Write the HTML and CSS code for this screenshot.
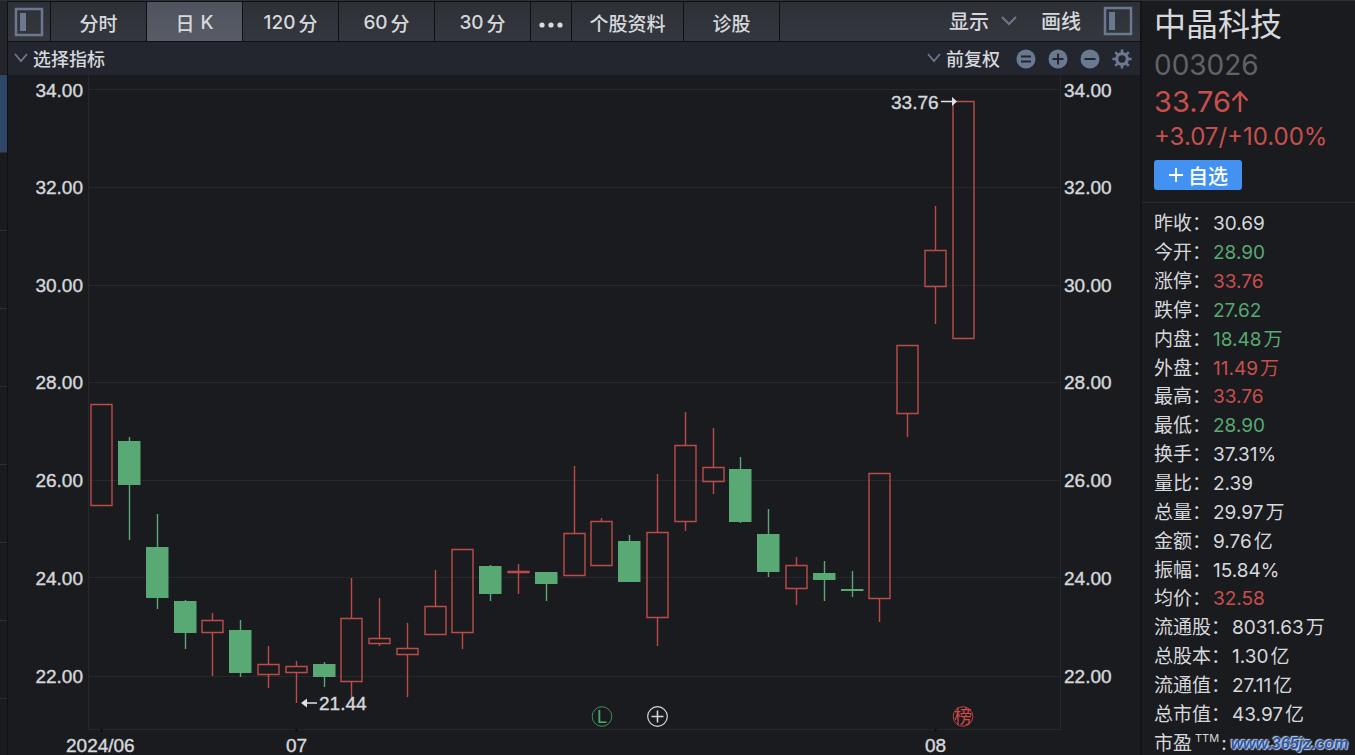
FILE: index.html
```html
<!DOCTYPE html>
<html lang="zh-CN">
<head>
<meta charset="utf-8">
<title>中晶科技 003026</title>
<link rel="stylesheet" href="styles.css">
</head>
<body>
<div class="app">
  <div class="rail">
    <div class="rail-head"></div>
    <div class="rail-cell rail-active"></div>
    <div class="rail-cell"></div><div class="rail-cell"></div><div class="rail-cell"></div><div class="rail-cell"></div>
    <div class="rail-cell"></div><div class="rail-cell"></div><div class="rail-cell"></div><div class="rail-cell"></div>
  </div>
  <main class="main">
    <div class="toolbar">
      <button class="tab tab-icon" aria-label="左侧面板"><svg width="30" height="30" viewBox="0 0 30 30"><rect x="2" y="2" width="26" height="26" fill="none" stroke="#6b7990" stroke-width="2.5"/><rect x="6" y="6" width="6" height="18" fill="#6b7990"/></svg></button>
      <button class="tab">分时</button>
      <button class="tab tab-on">日<span class="num">K</span></button>
      <button class="tab"><span class="num">120</span>分</button>
      <button class="tab"><span class="num">60</span>分</button>
      <button class="tab"><span class="num">30</span>分</button>
      <button class="tab tab-more" aria-label="更多"><svg width="26" height="8" viewBox="0 0 26 8"><g fill="#d9dbdf"><circle cx="4" cy="4" r="2.6"/><circle cx="13" cy="4" r="2.6"/><circle cx="22" cy="4" r="2.6"/></g></svg></button>
      <button class="tab tab-wide">个股资料</button>
      <button class="tab">诊股</button>
      <div class="tools">
        <button class="tool">显示<svg width="16" height="10" viewBox="0 0 16 10"><path d="M1 1 8 8 15 1" fill="none" stroke="#6b7990" stroke-width="2"/></svg></button>
        <button class="tool">画线</button>
        <button class="tool" aria-label="右侧面板"><svg width="30" height="30" viewBox="0 0 30 30"><rect x="2" y="2" width="26" height="26" fill="none" stroke="#6b7990" stroke-width="2.5"/><rect x="6" y="6" width="6" height="18" fill="#6b7990"/></svg></button>
      </div>
    </div>
    <div class="subbar">
      <button class="sub"><svg width="14" height="10" viewBox="0 0 14 10"><path d="M1 1 7 8 13 1" fill="none" stroke="#6b7990" stroke-width="1.8"/></svg>选择指标</button>
      <div class="sub-right">
        <button class="sub"><svg width="14" height="10" viewBox="0 0 14 10"><path d="M1 1 7 8 13 1" fill="none" stroke="#6b7990" stroke-width="1.8"/></svg>前复权</button>
        <div class="rounds">
          <button class="round" aria-label="重置"><svg width="20" height="20" viewBox="0 0 20 20"><circle cx="10" cy="10" r="9.5" fill="#6b7990"/><path d="M5 7.5H15M5 12.5H15" stroke="#22252d" stroke-width="1.8"/></svg></button>
          <button class="round" aria-label="放大"><svg width="20" height="20" viewBox="0 0 20 20"><circle cx="10" cy="10" r="9.5" fill="#6b7990"/><path d="M4.5 10H15.5M10 4.5V15.5" stroke="#22252d" stroke-width="2"/></svg></button>
          <button class="round" aria-label="缩小"><svg width="20" height="20" viewBox="0 0 20 20"><circle cx="10" cy="10" r="9.5" fill="#6b7990"/><path d="M4.5 10H15.5" stroke="#22252d" stroke-width="2"/></svg></button>
          <button class="round" aria-label="设置"><svg width="20" height="20" viewBox="0 0 20 20"><circle cx="10" cy="10" r="5.3" fill="none" stroke="#6b7990" stroke-width="3.2"/><g stroke="#6b7990" stroke-width="2.6"><path d="M10 .4V4M10 16V19.6M.4 10H4M16 10H19.6"/><path d="M3.2 3.2 5.7 5.7M14.3 14.3 16.8 16.8M3.2 16.8 5.7 14.3M14.3 5.7 16.8 3.2"/></g></svg></button>
        </div>
      </div>
    </div>
    <svg class="chart" viewBox="8 75 1132 680" preserveAspectRatio="xMidYMin meet" role="img" aria-label="日K线图">
      <g class="grid">
        <path d="M88 89.5H1061M88 187.5H1061M88 285.5H1061M88 382.5H1061M88 480.5H1061M88 577.5H1061M88 676.5H1061M88 729.5H1061M88.5 75V729M1060.5 75V729"/>
      </g>
      <path class="tick" d="M101.5 729V732M296.5 729V732M935.5 729V732"/>
      <g id="candles"></g>
      <g class="axis">
        <g text-anchor="end">
          <text x="83" y="97">34.00</text><text x="83" y="194">32.00</text><text x="83" y="292">30.00</text><text x="83" y="389">28.00</text><text x="83" y="487">26.00</text><text x="83" y="585">24.00</text><text x="83" y="683">22.00</text>
        </g>
        <text x="1064" y="97">34.00</text><text x="1064" y="194">32.00</text><text x="1064" y="292">30.00</text><text x="1064" y="389">28.00</text><text x="1064" y="487">26.00</text><text x="1064" y="585">24.00</text><text x="1064" y="683">22.00</text>
        <text x="66" y="752">2024/06</text><text x="286" y="752">07</text><text x="925" y="752">08</text>
        <text x="891" y="109">33.76</text><text x="319" y="710">21.44</text>
      </g>
      <path d="M941 101.5H954" stroke="#e2e3e6" stroke-width="1.5"/><path d="M952 97 957 101.5 952 106Z" fill="#e2e3e6"/>
      <path d="M305 703H317" stroke="#e2e3e6" stroke-width="1.5"/><path d="M307 698.5 301 703 307 707.5Z" fill="#e2e3e6"/>
      <circle class="badge-l" cx="602" cy="716.5" r="9.8"/>
      <text class="badge-l-text" x="602" y="723" text-anchor="middle">L</text>
      <g fill="none" stroke="#d5d7da" stroke-width="1.2"><circle cx="657.5" cy="716.5" r="9.8"/><path d="M651.5 716.5H663.5M657.5 710.5V722.5" stroke-width="1.6"/></g>
      <circle class="badge-b" cx="963" cy="716.5" r="9.8"/>
      <text class="badge-b-text" x="963" y="723" text-anchor="middle">榜</text>
    </svg>
  </main>
  <aside class="side">
    <header class="quote">
      <h1 class="name">中晶科技</h1>
      <div class="code">003026</div>
      <div class="price">33.76<svg width="18" height="24" viewBox="0 0 18 24"><path d="M9 22V3M1.5 10.5 9 2.5 16.5 10.5" fill="none" stroke="#c94f4c" stroke-width="2.5"/></svg></div>
      <div class="change">+3.07/+10.00%</div>
      <button class="fav"><svg width="16" height="16" viewBox="0 0 16 16"><path d="M1 8H15M8 1V15" stroke="#fff" stroke-width="1.8"/></svg>自选</button>
    </header>
    <dl class="stats">
      <div class="row"><dt>昨收：</dt><dd>30.69</dd></div>
      <div class="row"><dt>今开：</dt><dd class="down">28.90</dd></div>
      <div class="row"><dt>涨停：</dt><dd class="up">33.76</dd></div>
      <div class="row"><dt>跌停：</dt><dd class="down">27.62</dd></div>
      <div class="row"><dt>内盘：</dt><dd class="down">18.48<span class="unit">万</span></dd></div>
      <div class="row"><dt>外盘：</dt><dd class="up">11.49<span class="unit">万</span></dd></div>
      <div class="row"><dt>最高：</dt><dd class="up">33.76</dd></div>
      <div class="row"><dt>最低：</dt><dd class="down">28.90</dd></div>
      <div class="row"><dt>换手：</dt><dd>37.31%</dd></div>
      <div class="row"><dt>量比：</dt><dd>2.39</dd></div>
      <div class="row"><dt>总量：</dt><dd>29.97<span class="unit">万</span></dd></div>
      <div class="row"><dt>金额：</dt><dd>9.76<span class="unit">亿</span></dd></div>
      <div class="row"><dt>振幅：</dt><dd>15.84%</dd></div>
      <div class="row"><dt>均价：</dt><dd class="up">32.58</dd></div>
      <div class="row"><dt>流通股：</dt><dd>8031.63<span class="unit">万</span></dd></div>
      <div class="row"><dt>总股本：</dt><dd>1.30<span class="unit">亿</span></dd></div>
      <div class="row"><dt>流通值：</dt><dd>27.11<span class="unit">亿</span></dd></div>
      <div class="row"><dt>总市值：</dt><dd>43.97<span class="unit">亿</span></dd></div>
      <div class="row"><dt>市盈<sup class="ttm">TTM</sup><span class="colon">:</span></dt><dd><a class="site" href="#">www.365jz.com</a></dd></div>
    </dl>
  </aside>
</div>
<script src="chart.js"></script>
</body>
</html>
```
FILE: styles.css
```css
* { box-sizing: border-box; }
body {
  margin: 0;
  background: #1a1b1f;
  color: #d6d8dc;
  font-family: Inter, "Noto Sans CJK SC", sans-serif;
  font-size: 19px;
}
button {
  margin: 0;
  padding: 0;
  border: 0;
  background: none;
  color: inherit;
  font: inherit;
  font-weight: 500;
  display: flex;
  align-items: center;
  justify-content: center;
}
svg { display: block; }
.app {
  display: grid;
  grid-template-columns: 8px minmax(0, 1fr) 215px;
  height: 100vh;
  overflow: hidden;
  border-top: 1px solid #2d3035;
}
.rail { border-right: 1px solid #101114; overflow: hidden; }
.rail-head { height: 74px; background: #23252b; }
.rail-cell { height: 78px; border-bottom: 1px solid #2b2d31; }
.rail-active { background: #2f4666; }

.main { display: flex; flex-direction: column; min-width: 0; }
.toolbar {
  flex: none;
  display: flex;
  height: 41px;
  border-top: 1px solid #0f1012;
  border-bottom: 1px solid #0f1012;
  background: linear-gradient(#2d3036, #34373e);
}
.tab {
  width: 96px;
  padding-top: 2px;
  gap: 3px;
  border-right: 1px solid #0f1012;
}
.tab-icon { width: 43px; padding: 0; }
.tab-on { background: linear-gradient(#4e535d, #575c66); gap: 6px; }
.tab-more { width: 41px; padding-top: 6px; }
.tab-wide { width: 112px; }
.tools { display: flex; align-items: center; gap: 24px; margin-left: auto; padding: 0 7px 2px 0; }
.tool { gap: 12px; font-size: 20px; }
.tool:last-child { margin-left: -2px; }

.subbar {
  flex: none;
  display: flex;
  align-items: center;
  justify-content: space-between;
  height: 33px;
  padding: 0 8px 2px 6px;
  background: #23262e;
  font-size: 18px;
}
.sub { gap: 5px; }
.sub-right { display: flex; align-items: center; gap: 16px; }
.rounds { display: flex; gap: 12px; padding-top: 2px; }

.chart { flex: 1; min-height: 0; width: 100%; }
.grid { fill: none; stroke: #26282c; }
.tick { stroke: #0c0d0e; stroke-width: 2; }
.axis {
  fill: #d5d7db;
  stroke: #d5d7db;
  stroke-width: 0.4;
  font-family: "Liberation Sans", Arial, sans-serif;
  font-size: 19px;
}
.rise { fill: none; stroke: #bd4b49; stroke-width: 1.4; }
.fall { fill: #58a973; stroke: none; }
.badge-l { fill: none; stroke: #3f9159; }
.badge-l-text { fill: #4fa56c; font-family: "Liberation Sans", Arial, sans-serif; font-size: 18px; }
.badge-b { fill: none; stroke: #bd3f3e; }
.badge-b-text { fill: #d24a48; font-family: "Noto Sans CJK SC", sans-serif; font-size: 18px; }

.side {
  display: flex;
  flex-direction: column;
  border-left: 2px solid #131417;
  min-height: 0;
}
.quote {
  padding: 2px 0 12px 12px;
  border-bottom: 1px solid #292b2f;
}
.name { margin: 0; font-size: 32px; font-weight: 400; line-height: 44px; }
.code { color: #606268; font-size: 28px; line-height: 36px; }
.price { display: flex; align-items: center; color: #c94f4c; font-size: 29px; line-height: 38px; }
.change { color: #c94f4c; font-size: 24px; line-height: 32px; }
.fav {
  width: 88px;
  height: 30px;
  margin-top: 7px;
  gap: 4px;
  border-radius: 3px;
  background: #4392f1;
  color: #fff;
  font-size: 20px;
}
.stats {
  flex: 1;
  display: grid;
  grid-auto-rows: 1fr;
  min-height: 0;
  margin: 0 0 -3px;
  padding: 7px 0 0 12px;
}
.row { display: flex; align-items: center; gap: 2px; min-height: 0; line-height: 28px; white-space: nowrap; }
.row dt { font-size: 19px; }
.row dd { margin: 0; font-size: 19px; }
.unit { margin-left: 2px; }
.up { color: #c94f4c; }
.down { color: #58a973; }
.ttm { margin-left: 3px; font-size: 11px; line-height: 1; }
.colon { margin: 0 2px; }
.site {
  color: #2a56a4;
  font-family: "Liberation Sans", Arial, sans-serif;
  font-size: 16px;
  font-style: italic;
  font-weight: 700;
  text-decoration: none;
  text-shadow: 0 0 2px #d5def0, 1px 1px 1px #b9c6de, -1px -1px 1px #b9c6de;
}
```
FILE: chart.js
```js
// One row per day: direction, high, body top, body bottom, low.
const days = [
  ["r", 404, 404, 506, 506], ["g", 437, 441, 485, 540], ["g", 514, 547, 598, 609], ["g", 600, 601, 633, 649],
  ["r", 613, 620, 633, 676], ["g", 620, 630, 673, 677], ["r", 646, 664, 675, 688], ["r", 661, 666, 673, 703],
  ["g", 662, 664, 677, 687], ["r", 578, 618, 682, 697], ["r", 598, 638, 644, 646], ["r", 623, 648, 655, 697],
  ["r", 570, 606, 635, 635], ["r", 549, 549, 633, 649], ["g", 565, 566, 594, 601], ["r", 564, 571, 573, 594],
  ["g", 572, 572, 584, 601], ["r", 466, 533, 576, 576], ["r", 518, 521, 566, 566], ["g", 535, 541, 582, 582],
  ["r", 474, 532, 618, 646], ["r", 412, 445, 522, 531], ["r", 428, 467, 482, 494], ["g", 457, 469, 522, 523],
  ["g", 509, 534, 572, 577], ["r", 557, 565, 589, 605], ["g", 561, 573, 580, 601], ["g", 571, 589, 591, 597],
  ["r", 473, 473, 599, 622], ["r", 345, 345, 414, 437], ["r", 206, 250, 287, 324], ["r", 101, 101, 339, 339]
];
const candles = document.getElementById("candles");
days.forEach(([dir, high, top, bottom, low], i) => {
  const x = Math.round(101.2 + i * 27.79) + 0.5;
  const path = document.createElementNS("http://www.w3.org/2000/svg", "path");
  if (dir === "r") {
    const t = top + 0.5;
    const b = bottom - 0.5;
    path.setAttribute("class", "rise");
    path.setAttribute("d", `M${x - 10.5} ${t}H${x + 10.5}V${b}H${x - 10.5}ZM${x} ${high}V${t}M${x} ${b}V${low}`);
  } else {
    path.setAttribute("class", "fall");
    path.setAttribute("d", `M${x - 11.5} ${top}H${x + 11}V${bottom}H${x - 11.5}ZM${x - 0.7} ${high}H${x + 0.7}V${top}H${x - 0.7}ZM${x - 0.7} ${bottom}H${x + 0.7}V${low}H${x - 0.7}Z`);
  }
  candles.append(path);
});
```
